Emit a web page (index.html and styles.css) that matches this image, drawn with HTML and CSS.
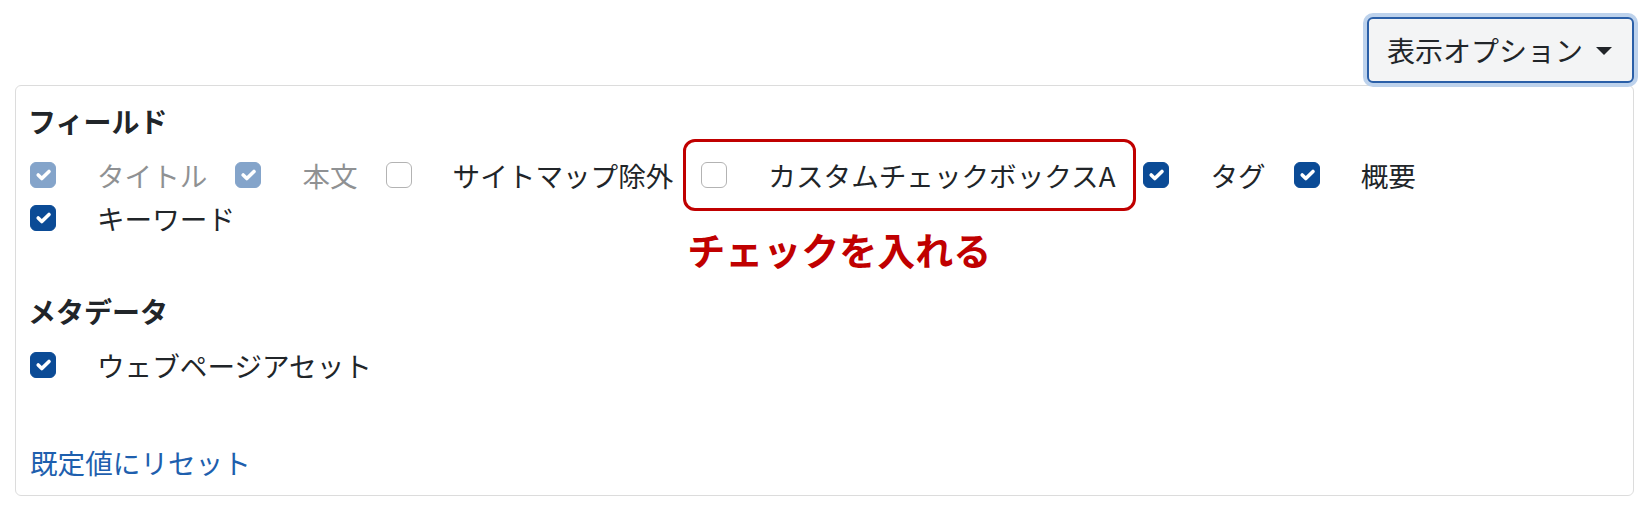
FILE: index.html
```html
<!doctype html>
<html lang="ja">
<head>
  <meta charset="utf-8">
  <meta name="viewport" content="width=device-width, initial-scale=1.0">
  <title>表示オプション</title>
  <link rel="stylesheet" href="styles.css">
</head>
<body>

<div class="page">
  <div class="toolbar">
    <button class="dropdown-btn" type="button">表示オプション<span class="caret"></span></button>
  </div>

  <div class="panel">
    <h3 class="group-title">フィールド</h3>
    <div class="check-list">
      <label class="check disabled">
        <span class="box on"><svg viewBox="0 0 20 20"><path d="m6 10 3 3 6-6"/></svg></span>タイトル
      </label>
      <label class="check disabled">
        <span class="box on"><svg viewBox="0 0 20 20"><path d="m6 10 3 3 6-6"/></svg></span>本文
      </label>
      <label class="check">
        <span class="box"></span>サイトマップ除外
      </label>
      <label class="check marked">
        <span class="box"></span>カスタムチェックボックスA
        <span class="callout"></span>
        <span class="callout-note">チェックを入れる</span>
      </label>
      <label class="check">
        <span class="box on"><svg viewBox="0 0 20 20"><path d="m6 10 3 3 6-6"/></svg></span>タグ
      </label>
      <label class="check">
        <span class="box on"><svg viewBox="0 0 20 20"><path d="m6 10 3 3 6-6"/></svg></span>概要
      </label>
      <label class="check">
        <span class="box on"><svg viewBox="0 0 20 20"><path d="m6 10 3 3 6-6"/></svg></span>キーワード
      </label>
    </div>

    <h3 class="group-title meta">メタデータ</h3>
    <div class="check-list">
      <label class="check">
        <span class="box on"><svg viewBox="0 0 20 20"><path d="m6 10 3 3 6-6"/></svg></span>ウェブページアセット
      </label>
    </div>

    <a class="reset-link" href="#">既定値にリセット</a>
  </div>
</div>

</body>
</html>
```

FILE: styles.css
```css
body {
  margin: 0;
  background: #fff;
  color: #212529;
  font-family: "Noto Sans CJK JP", "Noto Sans", sans-serif;
  font-size: 27.6px;
}

.page {
  padding: 17px 18px 0 15px;
}

/* ボタン */
.toolbar {
  display: flex;
  justify-content: flex-end;
}

.dropdown-btn {
  display: flex;
  align-items: center;
  gap: 13px;
  height: 66px;
  padding: 0 20px 0 18px;
  font-family: inherit;
  font-size: 28px;
  color: #212529;
  background: #f3f4f5;
  border: 2px solid #2a5fa8;
  border-radius: 6px;
  box-shadow: 0 0 0 4px #bdd2ec;
}

.caret {
  width: 0;
  height: 0;
  border-left: 8px solid transparent;
  border-right: 8px solid transparent;
  border-top: 8px solid #212529;
  margin-top: 2px;
}

/* パネル */
.panel {
  margin-top: 2px;
  border: 1px solid #dcdcdc;
  border-radius: 6px;
  padding: 17px 14px 15px;
}

.group-title {
  margin: 0 0 14px -2px;
  font-size: 28px;
  font-weight: bold;
  line-height: 36px;
}

.group-title.meta {
  margin-top: 54px;
}

.check-list {
  display: flex;
  flex-wrap: wrap;
}

.check {
  display: inline-flex;
  align-items: center;
  height: 43px;
  margin-right: 28px;
  white-space: nowrap;
}

.check.disabled {
  opacity: 0.5;
}

.box {
  width: 26px;
  height: 26px;
  box-sizing: border-box;
  margin-right: 41px;
  border: 1.5px solid #b3b3b3;
  border-radius: 6px;
  background: #fff;
  display: flex;
}

.box.on {
  background: #0b4b96;
  border-color: #0b4b96;
}

.box svg {
  width: 100%;
  height: 100%;
  fill: none;
  stroke: #fff;
  stroke-width: 3;
  stroke-linecap: round;
  stroke-linejoin: round;
}

/* 注釈 */
.marked {
  position: relative;
}

.callout {
  position: absolute;
  left: -18px;
  right: -21px;
  top: -14px;
  bottom: -15px;
  border: 3px solid #c00000;
  border-radius: 12px;
}

.callout-note {
  position: absolute;
  left: -14px;
  top: 77px;
  font-size: 38px;
  font-weight: bold;
  line-height: 1;
  color: #c00000;
}

.reset-link {
  display: block;
  margin-top: 58px;
  line-height: 36px;
  color: #1e5fae;
  text-decoration: none;
}
```
